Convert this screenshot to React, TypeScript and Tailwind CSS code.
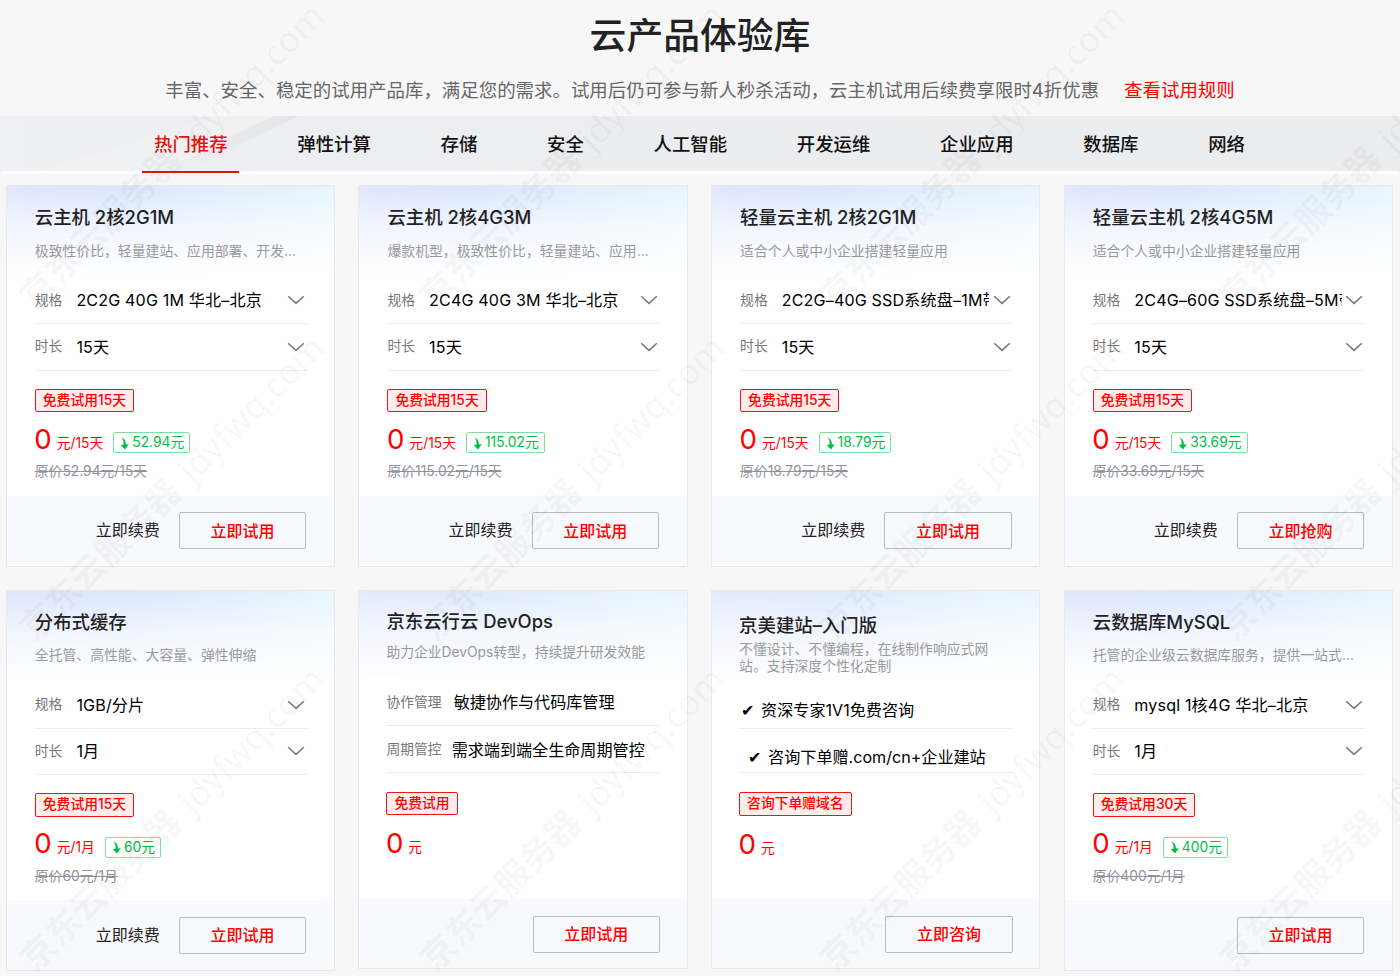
import React from 'react';

interface Row {
  label?: string;
  value: string;
  select?: boolean;
  rowClass?: string;
  valueClass?: string;
}

interface Product {
  id: number;
  title: string;
  desc: string;
  rows: Row[];
  tag: string;
  unit: string;
  saved?: string;
  origin?: string;
  renew?: boolean;
  action: string;
  headClass?: string;
  descClass?: string;
  tagClass?: string;
  short?: boolean;
}

const TABS = ['热门推荐', '弹性计算', '存储', '安全', '人工智能', '开发运维', '企业应用', '数据库', '网络'];

const PRODUCTS: Product[] = [
  {
    id: 1,
    title: '云主机 2核2G1M',
    desc: '极致性价比，轻量建站、应用部署、开发…',
    rows: [
      { label: '规格', value: '2C2G 40G 1M 华北–北京', select: true },
      { label: '时长', value: '15天', select: true },
    ],
    tag: '免费试用15天',
    unit: '元/15天',
    saved: '52.94元',
    origin: '原价52.94元/15天',
    renew: true,
    action: '立即试用',
  },
  {
    id: 2,
    title: '云主机 2核4G3M',
    desc: '爆款机型，极致性价比，轻量建站、应用…',
    rows: [
      { label: '规格', value: '2C4G 40G 3M 华北–北京', select: true },
      { label: '时长', value: '15天', select: true },
    ],
    tag: '免费试用15天',
    unit: '元/15天',
    saved: '115.02元',
    origin: '原价115.02元/15天',
    renew: true,
    action: '立即试用',
  },
  {
    id: 3,
    title: '轻量云主机 2核2G1M',
    desc: '适合个人或中小企业搭建轻量应用',
    rows: [
      { label: '规格', value: '2C2G–40G SSD系统盘–1M带宽', select: true },
      { label: '时长', value: '15天', select: true },
    ],
    tag: '免费试用15天',
    unit: '元/15天',
    saved: '18.79元',
    origin: '原价18.79元/15天',
    renew: true,
    action: '立即试用',
  },
  {
    id: 4,
    title: '轻量云主机 2核4G5M',
    desc: '适合个人或中小企业搭建轻量应用',
    rows: [
      { label: '规格', value: '2C4G–60G SSD系统盘–5M带宽', select: true },
      { label: '时长', value: '15天', select: true },
    ],
    tag: '免费试用15天',
    unit: '元/15天',
    saved: '33.69元',
    origin: '原价33.69元/15天',
    renew: true,
    action: '立即抢购',
  },
  {
    id: 5,
    title: '分布式缓存',
    desc: '全托管、高性能、大容量、弹性伸缩',
    rows: [
      { label: '规格', value: '1GB/分片', select: true },
      { label: '时长', value: '1月', select: true },
    ],
    tag: '免费试用15天',
    unit: '元/1月',
    saved: '60元',
    origin: '原价60元/1月',
    renew: true,
    action: '立即试用',
  },
  {
    id: 6,
    title: '京东云行云 DevOps',
    desc: '助力企业DevOps转型，持续提升研发效能',
    rows: [
      { label: '协作管理', value: '敏捷协作与代码库管理', rowClass: 'h-[47px] pt-[1px]', valueClass: 'ml-[12px]' },
      { label: '周期管控', value: '需求端到端全生命周期管控', rowClass: 'h-[46.5px] pt-[2px]', valueClass: 'ml-[10px]' },
    ],
    tag: '免费试用',
    unit: '元',
    action: '立即试用',
    headClass: 'pt-[16px] pl-[27px]',
    descClass: 'mt-[7.5px] leading-[20px] mb-[17px] tracking-[-0.05px]',
    tagClass: 'mt-[19px]',
    short: true,
  },
  {
    id: 7,
    title: '京美建站–入门版',
    desc: '不懂设计、不懂编程，在线制作响应式网站。支持深度个性化定制',
    rows: [
      { value: '✔ 资深专家1V1免费咨询', rowClass: 'h-[37px] pt-[1px]', valueClass: 'ml-[2px] [word-spacing:2.5px]' },
      {
        value: '✔ 咨询下单赠.com/cn+企业建站',
        rowClass: 'h-[44px] pt-[14px]',
        valueClass: 'ml-[9px] [word-spacing:2.5px]',
      },
    ],
    tag: '咨询下单赠域名',
    unit: '元',
    action: '立即咨询',
    headClass: 'pt-[20px] pl-[27px]',
    descClass: 'mt-[2px] w-[254px] leading-[17px] mb-[17px]',
    tagClass: 'mt-[19.5px]',
    short: true,
  },
  {
    id: 8,
    title: '云数据库MySQL',
    desc: '托管的企业级云数据库服务，提供一站式…',
    rows: [
      { label: '规格', value: 'mysql 1核4G 华北–北京', select: true },
      { label: '时长', value: '1月', select: true },
    ],
    tag: '免费试用30天',
    unit: '元/1月',
    saved: '400元',
    origin: '原价400元/1月',
    action: '立即试用',
  },
];

const WATERMARKS = [0, 1, 2].flatMap(row => [0, 1, 2, 3].map(col => ({ x: 35 + col * 400, y: 292 + row * 331.5 })));

const Chevron = () => (
  <svg className="absolute right-[1.5px] top-1/2 -mt-[5px] w-[18px] h-[10px]" viewBox="0 0 18 10" fill="none">
    <path d="M1.2 1.2 9 8.4l7.8-7.2" stroke="#777" strokeWidth="1.5" />
  </svg>
);

const DownArrow = () => (
  <svg className="w-[9px] h-[13px] mr-[3px] mt-px shrink-0" viewBox="0 0 9 13">
    <path d="M1.2 0.6C4.6 1.4 6 4 5.8 7.4L8.8 7.2 5 12.4 0.6 8 3.4 7.8C4 5 3.4 2.6 1.2 0.6Z" fill="#00bd45" />
  </svg>
);

const ProductCard: React.FC<{ product: Product }> = ({ product }) => (
  <article
    className={`flex flex-col border border-[#e8e9ec] bg-white ${product.short ? 'h-[379.5px]' : 'h-[381.5px]'}`}
  >
    <div className="relative flex-1">
      <div
        className={`absolute inset-x-0 top-0 h-[90px] bg-[linear-gradient(to_bottom,rgba(255,255,255,0)_0%,rgba(255,255,255,0.6)_45%,#fff_100%),linear-gradient(to_right,#e0e6fd_0%,#d9e7fc_35%,#e6f5fe_100%)] ${
          product.short ? 'opacity-85' : ''
        }`}
      />

      <div className={`relative pr-[27px] ${product.headClass ?? 'pt-[17px] pl-[28px]'}`}>
        <h3 className="text-[18.4px] leading-[28px] font-medium text-[#222]">{product.title}</h3>
        <p className={`text-[13.85px] text-[#999] ${product.descClass ?? 'mt-[9.5px] leading-[20px] mb-[17px] whitespace-nowrap'}`}>
          {product.desc}
        </p>

        {product.rows.map(row => (
          <div
            key={row.value}
            className={`relative flex items-center border-b border-[#ececee] ${row.rowClass ?? 'h-[46.5px]'}`}
          >
            {row.label && <span className="text-[13.8px] text-[#777] shrink-0">{row.label}</span>}
            <span
              className={`text-[16.1px] text-black whitespace-nowrap overflow-hidden ${
                row.valueClass ?? 'ml-[14px] w-[207.5px] tracking-[0.15px]'
              }`}
            >
              {row.value}
            </span>
            {row.select && <Chevron />}
          </div>
        ))}

        <div className={`flex ${product.tagClass ?? 'mt-[18px]'}`}>
          <span className="h-[23.5px] px-[7px] flex items-center border border-[#f5150f] rounded-[2px] bg-[#ffecec] text-[13.8px] font-medium text-[#f00]">
            {product.tag}
          </span>
        </div>

        <div className={`flex items-center h-[40px] text-[#f00] ${product.short ? 'mt-[9.5px]' : 'mt-[8px]'}`}>
          <span className="text-[27.6px] leading-[40px] -mt-[3px] -ml-[0.5px]">0</span>
          <span className="text-[13.8px] ml-[5px] mt-[6px]">{product.unit}</span>
          {product.saved && (
            <span className="h-[21px] mt-[5px] ml-[10px] pl-[6px] pr-[5px] flex items-center border border-[#7fdf9f] rounded-[2px] text-[13.8px] text-[#00bd45]">
              <DownArrow />
              {product.saved}
            </span>
          )}
        </div>
        {product.origin && (
          <p className="mt-[1px] text-[13.8px] leading-[20px] text-[#8f939c] line-through">{product.origin}</p>
        )}
      </div>
    </div>

    <div
      className={`flex items-center justify-end bg-[#f8f9fc] ${
        product.short ? 'h-[69px] pr-[26.5px] pt-[1px]' : 'h-[70px] pr-[27.5px]'
      }`}
    >
      {product.renew && <a className="mr-[19px] -mt-px text-[16px] text-[#222]">立即续费</a>}
      <button className="w-[127.5px] h-[37px] border border-[#b9babd] rounded-[2px] text-[16px] font-medium text-[#f00]">
        {product.action}
      </button>
    </div>
  </article>
);

export default function App() {
  return (
    <div className="relative w-[1400px] h-[976px] overflow-hidden bg-[#f7f7f7] font-[Inter,'Noto_Sans_CJK_SC',sans-serif]">
      {/* Heading */}
      <header className="h-[116px] pt-[8px] flex flex-col items-center">
        <h1 className="text-[36.8px] leading-[56px] font-medium text-[#222]">云产品体验库</h1>
        <div className="mt-[12px] flex text-[18.46px] leading-[28px] text-[#666] whitespace-nowrap">
          <p>丰富、安全、稳定的试用产品库，满足您的需求。试用后仍可参与新人秒杀活动，云主机试用后续费享限时4折优惠</p>
          <a className="ml-[25px] text-[#f00]">查看试用规则</a>
        </div>
      </header>

      {/* Category tabs */}
      <div className="relative h-[58px]">
        <svg className="absolute inset-0 w-full h-[55px]" viewBox="0 0 1400 55" preserveAspectRatio="none">
          <defs>
            <linearGradient id="bar" x1="0" x2="1" y1="0" y2="0">
              <stop offset="0" stopColor="#eff0f3" />
              <stop offset="0.3" stopColor="#ecedf0" />
              <stop offset="1" stopColor="#ebecee" />
            </linearGradient>
            <linearGradient id="ray" x1="0" x2="1" y1="1" y2="0">
              <stop offset="0" stopColor="#e4e6ea" stopOpacity="0" />
              <stop offset="1" stopColor="#e4e5e9" />
            </linearGradient>
          </defs>
          <rect width="1400" height="55" fill="url(#bar)" />
          <path d="M40 55 215 0h75L160 55Z" fill="#f1f2f4" opacity="0.6" />
          <path d="M165 55 230 20 275 0h24L245 26 190 55Z" fill="url(#ray)" />
        </svg>
        <nav className="relative flex h-[58px] pl-[142px] gap-[45.7px]">
          {TABS.map((tab, idx) => (
            <a
              key={tab}
              className={`px-[12px] pt-[14px] text-[18.4px] leading-[28px] font-medium ${
                idx === 0 ? 'text-[#e1140a]' : 'text-[#111]'
              }`}
            >
              {tab}
            </a>
          ))}
        </nav>
        <div className="absolute left-[3px] right-[3px] bottom-0 h-[3px] bg-white" />
        <div className="absolute left-[142px] bottom-[1px] w-[97px] h-[2px] bg-[#e1140a]" />
      </div>

      {/* Products */}
      <main className="ml-[5.8px] mt-[11px] w-[1387px] grid grid-cols-4 items-start gap-x-[23.6px] gap-y-[23px]">
        {PRODUCTS.map(product => (
          <ProductCard key={product.id} product={product} />
        ))}
      </main>

      {/* Watermark */}
      <div className="absolute inset-0 overflow-hidden pointer-events-none select-none" aria-hidden="true">
        {WATERMARKS.map(mark => (
          <div
            key={`${mark.x}-${mark.y}`}
            className="absolute w-0 h-0 -rotate-45 text-[35px] text-black/[0.04] whitespace-nowrap font-['Noto_Sans','Noto_Sans_CJK_SC',sans-serif]"
            style={{ left: mark.x, top: mark.y }}
          >
            <div className="-mt-[26px] -ml-[13px] leading-[52px] [word-spacing:4px]">
              <b>京东云服务器</b> jdyfwq.com
            </div>
          </div>
        ))}
      </div>
    </div>
  );
}
